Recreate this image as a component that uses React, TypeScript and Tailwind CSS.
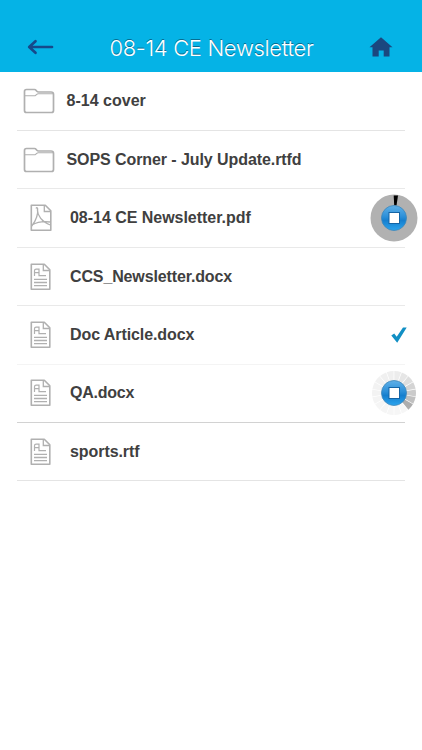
type FileType = "folder" | "pdf" | "doc";
type FileStatus = "progress" | "waiting" | "done";

type FileItem = {
  name: string;
  type: FileType;
  status?: FileStatus;
  line: string;
  spacing: string;
};

const files: FileItem[] = [
  { name: "8-14 cover", type: "folder", line: "border-[#e4e4e4]", spacing: "tracking-[0.02px]" },
  { name: "SOPS Corner - July Update.rtfd", type: "folder", line: "border-[#e9e9e9]", spacing: "tracking-[-0.08px]" },
  { name: "08-14 CE Newsletter.pdf", type: "pdf", status: "progress", line: "border-[#e9e9e9]", spacing: "tracking-[-0.03px]" },
  { name: "CCS_Newsletter.docx", type: "doc", line: "border-[#e9e9e9]", spacing: "tracking-[-0.13px]" },
  { name: "Doc Article.docx", type: "doc", status: "done", line: "border-[#f4f4f4]", spacing: "tracking-[-0.08px]" },
  { name: "QA.docx", type: "doc", status: "waiting", line: "border-[#d2d2d2]", spacing: "tracking-[-0.25px]" },
  { name: "sports.rtf", type: "doc", line: "border-[#e4e4e4]", spacing: "tracking-[-0.07px]" },
];

function FolderIcon() {
  return (
    <svg width="32" height="26" viewBox="0 0 32 26" fill="none" stroke="#b0b0b0">
      <path d="M1.5 22.5V3.5q0-2 2-2h8q1 0 1.7.9l.7.9q.6.7 1.6.7H28q2.5 0 2.5 2.2V22.5q0 2-2 2h-25q-2 0-2-2z" strokeWidth="1.7" />
      <path d="M2 7.8h9.2q1 0 1.7-.7l.8-.8q.6-.6 1.500-.6H30" strokeWidth="1.1" />
    </svg>
  );
}

function PdfIcon() {
  return (
    <svg width="22" height="28" viewBox="0 0 22 28" fill="none" stroke="#b0b0b0">
      <path d="M1.3 1.3h14l5.5 5.5v19.5H1.3z" strokeWidth="1.6" strokeLinejoin="round" />
      <path d="M14.3 1.500v6h6.2" strokeWidth="1.3" />
      <path d="M6 4.5q.8-1.5 1.6 0c.6 5.5-1.6 12-5.8 17.5M7.3 5.5c.2 6 4.5 12.500 13 15.500M2 21c5-2.800 12-3.800 18-3" strokeWidth="1.300" />
    </svg>
  );
}

function DocIcon() {
  return (
    <svg width="22" height="28" viewBox="0 0 22 28" fill="none" stroke="#b0b0b0">
      <path d="M1.3 1.3h13l5.5 5.5v19.5H1.3z" strokeWidth="1.6" strokeLinejoin="round" />
      <path d="M13.3 1.5v6h6.2" strokeWidth="1.3" />
      <path d="M4.5 13V7.8q0-1.6 1.6-1.6H9V12.7h7M4.5 9.7H9" strokeWidth="1.2" />
      <path d="M4 16.3h13M4 19.5h13M4 22.7h13" strokeWidth="1.3" />
    </svg>
  );
}

function StopButton() {
  return (
    <>
      <defs>
        <linearGradient id="stop" x1="0" y1="0" x2="0" y2="1">
          <stop offset="0" stopColor="#5fb0e8" />
          <stop offset=".45" stopColor="#2c8fd8" />
          <stop offset=".6" stopColor="#167fce" />
          <stop offset="1" stopColor="#2ba4ee" />
        </linearGradient>
      </defs>
      <circle cx="24" cy="24" r="12.5" fill="url(#stop)" stroke="#3f86b9" strokeWidth=".8" />
      <rect x="19" y="18.5" width="10.500" height="11" fill="#fff" stroke="#1464a5" strokeWidth="1" />
    </>
  );
}

function ProgressRing() {
  return (
    <svg width="48" height="48" viewBox="0 0 48 48">
      <circle cx="24" cy="24" r="23.5" fill="#b1b1b1" />
      <path d="M23.7 1.5h4.3l-1.5 10h-2.3z" fill="#000" />
      <StopButton />
    </svg>
  );
}

// one shade per segment, clockwise from the top
const shades = [
  "#ececec", "#e6e6e6", "#dedede", "#d4d4d4", "#cbcbcb", "#c0c0c0", "#adadad",
  "#f6f6f6", "#f6f6f6", "#f6f6f6", "#f5f5f5", "#f5f5f5", "#f4f4f4", "#f3f3f3",
  "#f2f2f2", "#f1f1f1", "#f0f0f0", "#efefef",
];

function WaitingRing() {
  return (
    <svg width="48" height="48" viewBox="0 0 48 48">
      {shades.map((shade, i) => (
        <path key={i} d="M24.3 2a22 22 0 0 1 6.9 1.2L27.7 12.5h-3.4z" fill={shade} transform={`rotate(${i * 20} 24 24)`} />
      ))}
      <StopButton />
    </svg>
  );
}

function Status({ status }: { status: FileStatus }) {
  if (status === "done") {
    return (
      <svg className="-mr-0.5" width="16" height="16" viewBox="0 0 16 16">
        <path d="M.3 8.5 3.2 6.600l2.500 3.200L12 .5h3.700L6.200 15.800z" fill="#118fc4" />
      </svg>
    );
  }
  return <div className="relative z-10 -mr-[13.400px]">{status === "progress" ? <ProgressRing /> : <WaitingRing />}</div>;
}

function FileRow({ file }: { file: FileItem }) {
  const isFolder = file.type === "folder";
  return (
    <li className={`flex h-[58.4px] items-center border-b ${file.line}`}>
      <div className={isFolder ? "ml-[5.5px] w-[44px]" : "ml-[13px] w-10"}>
        {file.type === "folder" && <FolderIcon />}
        {file.type === "pdf" && <PdfIcon />}
        {file.type === "doc" && <DocIcon />}
      </div>
      <span className={`flex-1 whitespace-nowrap text-[16px] leading-5 font-bold text-[#404040] ${file.spacing}`}>
        {file.name}
      </span>
      {file.status && <Status status={file.status} />}
    </li>
  );
}

export default function App() {
  return (
    <div className="h-[750px] w-[422px] overflow-hidden bg-white font-['Liberation_Sans',Arial,sans-serif]">
      <header className="flex h-[72px] items-center justify-between bg-[#05b3e6] pt-[22px] pr-[29px] pl-[27px]">
        <button aria-label="Back">
          <svg width="27" height="16" viewBox="0 0 27 16" fill="none" stroke="#16498a" strokeWidth="2.7" strokeLinecap="round" strokeLinejoin="round">
            <path d="M25 8H2.5M8.5 2.200 2.2 8l6.3 5.800" />
          </svg>
        </button>
        <h1 className="pt-0.5 font-[Inter,'Liberation_Sans',sans-serif] text-[22px] leading-7 font-light tracking-[-0.32px] whitespace-nowrap text-white [text-shadow:0_-1px_0_#076d91]">
          08-14 CE Newsletter
        </h1>
        <button aria-label="Home">
          <svg width="24" height="20" viewBox="0 0 24 20" fill="#1b477f">
            <path d="M12 .3 23.5 10.3H20.5V19.5H14.7V13.5H9.7V19.5H3.5V10.3H.5z" />
          </svg>
        </button>
      </header>
      <ul className="mx-[17px] pt-[0.7px]">
        {files.map((file) => (
          <FileRow key={file.name} file={file} />
        ))}
      </ul>
    </div>
  );
}
